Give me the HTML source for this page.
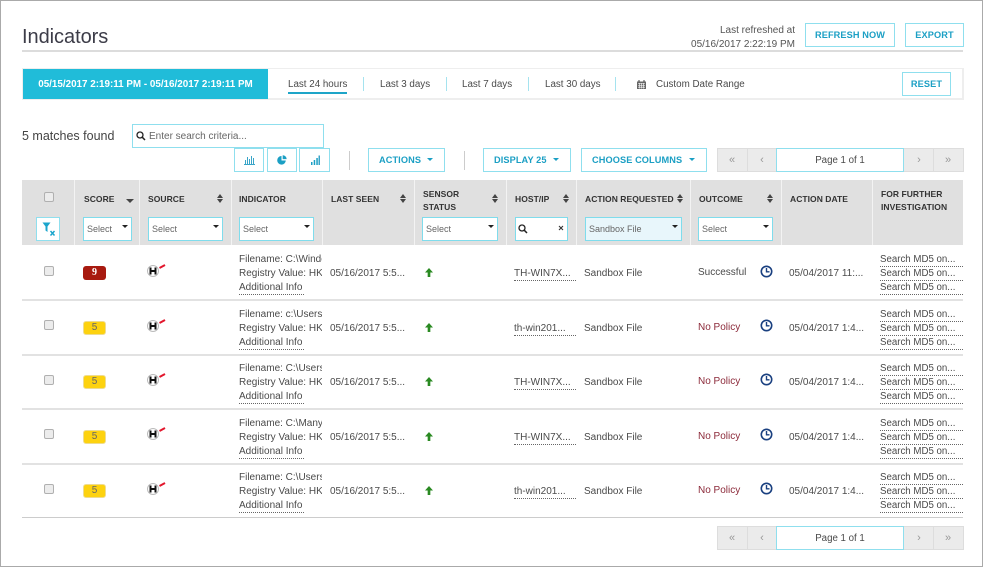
<!DOCTYPE html>
<html><head><meta charset="utf-8"><style>
html,body{margin:0;padding:0;background:#fff}
#p{position:relative;width:981px;height:565px;border:1px solid #aaa;overflow:hidden;margin:0;background:#fff;font:10px/14px "Liberation Sans",sans-serif;color:#4a4a4a}
#w{position:absolute;left:-1px;top:-1px;width:983px;height:567px}
#w div,#w span,#w svg{position:absolute;box-sizing:border-box}
.t{white-space:nowrap}
.tab{font-size:9.8px}
.b{border:1px solid #8fdfee;background:#fff;color:#1b9fc4;font-weight:bold;font-size:9.2px;letter-spacing:.1px;text-align:center;line-height:23px;white-space:nowrap}
.h{font-weight:bold;font-size:8.5px;line-height:12.5px;color:#333;letter-spacing:.05px;white-space:nowrap}
.s{background:#fff;border:1px solid #7fdcec;height:24px;top:217px;font-size:9px;line-height:23px;padding-left:3px;color:#666}
.s:after{content:"";position:absolute;right:3px;top:7px;border:3px solid transparent;border-top:3px solid #222;border-bottom:0}
.s.n:after{display:none}
.v{width:1px;background:#fff;top:180px;height:65px;border-left:1px solid #f3f3f3}
.l{height:2px;left:22px;width:941px;background:#e2e2e2}
.r{left:0;width:983px;height:56px}
.r .t,.r .o{margin-top:1px}
.u{border-bottom:1px dotted #666}
.m{left:880px;height:14px;width:83px;font-size:9.7px}
.ar{left:425px;top:23px}
.sep{width:1px;height:14px;top:77px;background:#a5e3ef}
.pg{background:#ebebeb;border:1px solid #ddd;height:24px;left:717px;width:247px}
.pf{background:#fff;border:1px solid #8fdfee;height:24px;left:776px;width:128px;text-align:center;line-height:23px;font-size:9.7px}
.pa{color:#999;font-size:11px;line-height:25px;width:20px;text-align:center}
.sd{width:1px;height:24px;background:#ddd}
.ca{border:3px solid transparent;border-top:3.5px solid #1b9fc4;border-bottom:0;top:158px}
.so:before,.so:after{content:"";position:absolute;left:0;border:3.5px solid transparent}
.so{width:7px;height:9px}
.so:before{top:0;border-bottom:4px solid #444;border-top:0}
.so:after{top:5px;border-top:4px solid #444;border-bottom:0}
.cb{left:44px;width:10px;height:10px;background:#ececec;border:1.5px solid #b0b0b0;border-radius:2px}
.bd{left:83px;width:23px;height:14px;border-radius:3px;top:21px;text-align:center;font-size:10px;line-height:14px}
.red{background:#a81a10;color:#fff;font-weight:bold;font-family:"Liberation Serif",serif}
.yel{background:#fdd20f;color:#666;border:1px solid #eedc90;line-height:12px}
.o{overflow:hidden;white-space:nowrap}
</style></head><body><div id="p"><div id="w">

<div class="t" style="left:22px;top:25px;font-size:20px;line-height:24px;color:#3c3c48;letter-spacing:-.05px">Indicators</div>
<div class="t" style="right:188px;top:24px;font-size:10px;line-height:13.5px;text-align:right;color:#555;white-space:normal;width:130px">Last refreshed at<br>05/16/2017 2:22:19 PM</div>
<div class="b" style="left:805px;top:23px;width:90px;height:24px">REFRESH NOW</div>
<div class="b" style="left:905px;top:23px;width:59px;height:24px">EXPORT</div>
<div style="left:22px;top:50px;width:941px;height:2px;background:#dcdcdc"></div>

<div style="left:22px;top:68px;width:942px;height:32px;border:1px solid #eee;border-width:1px 2px 2px 1px"></div>
<div class="t" style="left:23px;top:69px;width:245px;height:30px;background:#20bcd9;color:#fff;font-weight:bold;text-align:center;line-height:31px;font-size:9.85px">05/15/2017 2:19:11 PM - 05/16/2017 2:19:11 PM</div>
<div class="t tab" style="left:288px;top:78px">Last 24 hours</div>
<div style="left:288px;top:92px;width:59px;height:2px;background:#1ea5c8"></div>
<div class="sep" style="left:363px"></div>
<div class="t tab" style="left:380px;top:78px">Last 3 days</div>
<div class="sep" style="left:446px"></div>
<div class="t tab" style="left:462px;top:78px">Last 7 days</div>
<div class="sep" style="left:528px"></div>
<div class="t tab" style="left:545px;top:78px">Last 30 days</div>
<div class="sep" style="left:615px"></div>
<svg style="left:637px;top:80px" width="9" height="9" viewBox="0 0 9 9"><path d="M0 1.500h9V9H0z" fill="#666"/><path d="M1 3.500h7M1 5.500h7M1 7.200h7M2.700 3v5.500M4.500 3v5.500M6.300 3v5.500" stroke="#fff" stroke-width=".6"/><path d="M2 0v2M7 0v2" stroke="#444"/></svg>
<div class="t tab" style="left:656px;top:78px">Custom Date Range</div>
<div class="b" style="left:902px;top:72px;width:49px;height:24px">RESET</div>

<div class="t" style="left:22px;top:129px;font-size:12.5px;color:#444">5 matches found</div>
<div style="left:132px;top:124px;width:192px;height:24px;border:1px solid #8fdfee;background:#fff"></div>
<svg style="left:136px;top:131px" width="10" height="10" viewBox="0 0 10 10"><circle cx="4" cy="4" r="3" fill="none" stroke="#222" stroke-width="1.300"/><path d="M6.200 6.200L9 9" stroke="#222" stroke-width="1.500"/></svg>
<div class="t" style="left:149px;top:130px;font-size:10px;color:#666">Enter search criteria...</div>

<div class="b" style="left:234px;top:148px;width:30px;height:24px"></div>
<svg style="left:244px;top:155px" width="11" height="10" viewBox="0 0 11 10"><path d="M0 9.500h11M1.500 5v4M3.500 2v7M5.500 4v5M7.500 1v8M9.500 3v6" stroke="#3aa5c8" fill="none"/></svg>
<div class="b" style="left:267px;top:148px;width:30px;height:24px"></div>
<svg style="left:277px;top:155px" width="10" height="10" viewBox="0 0 10 10"><path d="M4.500 1a4.300 4.300 0 1 0 4.300 4.500H4.500z" fill="#1b9fc4"/><path d="M5.700 0.200a4 4 0 0 1 4 3.900H5.700z" fill="#1b9fc4"/></svg>
<div class="b" style="left:299px;top:148px;width:31px;height:24px"></div>
<svg style="left:310px;top:155px" width="10" height="10" viewBox="0 0 10 10"><path d="M1 7h1.500v3H1zM3.700 5h1.500v5H3.700zM6.300 3h1.500v7H6.300z" fill="#1b9fc4"/><path d="M8.500 0.500H10V10H8.500z" fill="#3aa5c8"/></svg>
<div style="left:349px;top:151px;width:1px;height:19px;background:#ccc"></div>
<div class="b" style="left:368px;top:148px;width:77px;height:24px;text-align:left;padding-left:10px">ACTIONS</div>
<div class="ca" style="left:427px"></div>
<div style="left:464px;top:151px;width:1px;height:19px;background:#ccc"></div>
<div class="b" style="left:483px;top:148px;width:88px;height:24px;text-align:left;padding-left:10px">DISPLAY 25</div>
<div class="ca" style="left:553px"></div>
<div class="b" style="left:581px;top:148px;width:126px;height:24px;text-align:left;padding-left:10px">CHOOSE COLUMNS</div>
<div class="ca" style="left:689px"></div>

<div class="pg" style="top:148px"></div>
<div class="sd" style="left:747px;top:148px"></div>
<div class="sd" style="left:933px;top:148px"></div>
<div class="pf" style="top:148px">Page 1 of 1</div>
<div class="pa" style="left:722px;top:148px">«</div>
<div class="pa" style="left:752px;top:148px">‹</div>
<div class="pa" style="left:909px;top:148px">›</div>
<div class="pa" style="left:938px;top:148px">»</div>

<div style="left:22px;top:180px;width:941px;height:65px;background:#e0e0e0"></div>
<div class="v" style="left:74px"></div><div class="v" style="left:139px"></div><div class="v" style="left:231px"></div><div class="v" style="left:322px"></div><div class="v" style="left:414px"></div><div class="v" style="left:506px"></div><div class="v" style="left:576px"></div><div class="v" style="left:690px"></div><div class="v" style="left:781px"></div><div class="v" style="left:872px"></div>
<div class="cb" style="top:192px"></div>
<div class="b" style="left:36px;top:217px;width:24px;height:24px"></div>
<svg style="left:42px;top:222px" width="14" height="14" viewBox="0 0 14 14"><path d="M0.500 0.500h8L5.500 4.500V10L3.500 8.500V4.500z" fill="#1ba5cc"/><path d="M8.500 9l4 4.500M12.500 9l-4 4.500" stroke="#1ba5cc" stroke-width="1.500"/></svg>
<div class="h" style="left:84px;top:193px">SCORE</div>
<div class="h" style="left:148px;top:193px">SOURCE</div>
<div class="h" style="left:239px;top:193px">INDICATOR</div>
<div class="h" style="left:331px;top:193px">LAST SEEN</div>
<div class="h" style="left:423px;top:188px">SENSOR<br>STATUS</div>
<div class="h" style="left:515px;top:193px">HOST/IP</div>
<div class="h" style="left:585px;top:193px">ACTION REQUESTED</div>
<div class="h" style="left:699px;top:193px">OUTCOME</div>
<div class="h" style="left:790px;top:193px">ACTION DATE</div>
<div class="h" style="left:881px;top:188px">FOR FURTHER<br>INVESTIGATION</div>
<div style="left:126px;top:199px;border:4px solid transparent;border-top:4px solid #444;border-bottom:0"></div>
<div class="so" style="left:217px;top:194px"></div>
<div class="so" style="left:400px;top:194px"></div>
<div class="so" style="left:492px;top:194px"></div>
<div class="so" style="left:563px;top:194px"></div>
<div class="so" style="left:677px;top:194px"></div>
<div class="so" style="left:767px;top:194px"></div>
<div class="s" style="left:83px;width:49px">Select</div>
<div class="s" style="left:148px;width:75px">Select</div>
<div class="s" style="left:239px;width:75px">Select</div>
<div class="s" style="left:422px;width:76px">Select</div>
<div class="s n" style="left:515px;width:53px"></div>
<svg style="left:518px;top:224px" width="10" height="10" viewBox="0 0 10 10"><circle cx="4" cy="4" r="3" fill="none" stroke="#222" stroke-width="1.300"/><path d="M6.200 6.200L9 9" stroke="#222" stroke-width="1.500"/></svg>
<svg style="left:558px;top:225px" width="6" height="6" viewBox="0 0 6 6"><path d="M1 1l4 4M5 1l-4 4" stroke="#333" stroke-width="1.100"/></svg>
<div class="s" style="left:585px;width:97px;background:#e8f6fb">Sandbox File</div>
<div class="s" style="left:698px;width:75px">Select</div>

<!-- ROW 1 -->
<div class="r" style="top:245px">
<div class="cb" style="top:21px"></div><div class="bd red">9</div>
<svg style="left:147px;top:18px" width="20" height="14" viewBox="0 0 20 14"><circle cx="6" cy="8" r="5.500" fill="#fff" stroke="#bbb"/><path d="M3.500 4.500v7M8.500 4.500v7M3.500 8h5" stroke="#111" stroke-width="2"/><path d="M12.500 5L18 2" stroke="#e2162c" stroke-width="2"/></svg>
<div class="o" style="left:239px;top:7px;width:83px;height:14px">Filename: C:\Windows\System</div>
<div class="o" style="left:239px;top:21px;width:83px;height:14px">Registry Value: HKEY</div>
<div class="t u" style="left:239px;top:35px;height:14px;width:65px">Additional Info</div>
<div class="t" style="left:330px;top:21px">05/16/2017 5:5...</div>
<svg class="ar" width="8" height="9" viewBox="0 0 9 10"><path d="M4.500 0L9 5H6v5H3V5H0z" fill="#2a8a22"/></svg>
<div class="t u" style="left:514px;top:21px;height:14px;width:62px">TH-WIN7X...</div>
<div class="t" style="left:584px;top:21px">Sandbox File</div>
<div class="t" style="left:698px;top:20px">Successful</div>
<svg style="left:760px;top:20px" width="13" height="13" viewBox="0 0 13 13"><circle cx="6.500" cy="6.500" r="5.200" fill="none" stroke="#1a4080" stroke-width="1.600"/><path d="M6.500 3v3.800h3" fill="none" stroke="#1a4080" stroke-width="1.400"/></svg>
<div class="t" style="left:789px;top:21px">05/04/2017 11:...</div>
<div class="t u m" style="top:7px">Search MD5 on...</div>
<div class="t u m" style="top:21px">Search MD5 on...</div>
<div class="t u m" style="top:35px">Search MD5 on...</div>
<div class="l" style="top:54px"></div>
</div>

<!-- ROW 2 -->
<div class="r" style="top:300px">
<div class="cb" style="top:20px"></div><div class="bd yel">5</div>
<svg style="left:147px;top:18px" width="20" height="14" viewBox="0 0 20 14"><circle cx="6" cy="8" r="5.500" fill="#fff" stroke="#bbb"/><path d="M3.500 4.500v7M8.500 4.500v7M3.500 8h5" stroke="#111" stroke-width="2"/><path d="M12.500 5L18 2" stroke="#e2162c" stroke-width="2"/></svg>
<div class="o" style="left:239px;top:7px;width:83px;height:14px">Filename: c:\Users\Admin</div>
<div class="o" style="left:239px;top:21px;width:83px;height:14px">Registry Value: HKEY</div>
<div class="t u" style="left:239px;top:35px;height:14px;width:65px">Additional Info</div>
<div class="t" style="left:330px;top:21px">05/16/2017 5:5...</div>
<svg class="ar" width="8" height="9" viewBox="0 0 9 10"><path d="M4.500 0L9 5H6v5H3V5H0z" fill="#2a8a22"/></svg>
<div class="t u" style="left:514px;top:21px;height:14px;width:62px">th-win201...</div>
<div class="t" style="left:584px;top:21px">Sandbox File</div>
<div class="t" style="left:698px;top:20px;color:#8c2a3a">No Policy</div>
<svg style="left:760px;top:19px" width="13" height="13" viewBox="0 0 13 13"><circle cx="6.500" cy="6.500" r="5.200" fill="none" stroke="#1a4080" stroke-width="1.600"/><path d="M6.500 3v3.800h3" fill="none" stroke="#1a4080" stroke-width="1.400"/></svg>
<div class="t" style="left:789px;top:21px">05/04/2017 1:4...</div>
<div class="t u m" style="top:7px">Search MD5 on...</div>
<div class="t u m" style="top:21px">Search MD5 on...</div>
<div class="t u m" style="top:35px">Search MD5 on...</div>
<div class="l" style="top:54px"></div>
</div>

<!-- ROW 3 -->
<div class="r" style="top:354px">
<div class="cb" style="top:21px"></div><div class="bd yel">5</div>
<svg style="left:147px;top:18px" width="20" height="14" viewBox="0 0 20 14"><circle cx="6" cy="8" r="5.500" fill="#fff" stroke="#bbb"/><path d="M3.500 4.500v7M8.500 4.500v7M3.500 8h5" stroke="#111" stroke-width="2"/><path d="M12.500 5L18 2" stroke="#e2162c" stroke-width="2"/></svg>
<div class="o" style="left:239px;top:7px;width:83px;height:14px">Filename: C:\Users\Admin</div>
<div class="o" style="left:239px;top:21px;width:83px;height:14px">Registry Value: HKEY</div>
<div class="t u" style="left:239px;top:35px;height:14px;width:65px">Additional Info</div>
<div class="t" style="left:330px;top:21px">05/16/2017 5:5...</div>
<svg class="ar" width="8" height="9" viewBox="0 0 9 10"><path d="M4.500 0L9 5H6v5H3V5H0z" fill="#2a8a22"/></svg>
<div class="t u" style="left:514px;top:21px;height:14px;width:62px">TH-WIN7X...</div>
<div class="t" style="left:584px;top:21px">Sandbox File</div>
<div class="t" style="left:698px;top:20px;color:#8c2a3a">No Policy</div>
<svg style="left:760px;top:19px" width="13" height="13" viewBox="0 0 13 13"><circle cx="6.500" cy="6.500" r="5.200" fill="none" stroke="#1a4080" stroke-width="1.600"/><path d="M6.500 3v3.800h3" fill="none" stroke="#1a4080" stroke-width="1.400"/></svg>
<div class="t" style="left:789px;top:21px">05/04/2017 1:4...</div>
<div class="t u m" style="top:7px">Search MD5 on...</div>
<div class="t u m" style="top:21px">Search MD5 on...</div>
<div class="t u m" style="top:35px">Search MD5 on...</div>
<div class="l" style="top:54px"></div>
</div>

<!-- ROW 4 -->
<div class="r" style="top:409px">
<div class="cb" style="top:20px"></div><div class="bd yel">5</div>
<svg style="left:147px;top:17px" width="20" height="14" viewBox="0 0 20 14"><circle cx="6" cy="8" r="5.500" fill="#fff" stroke="#bbb"/><path d="M3.500 4.500v7M8.500 4.500v7M3.500 8h5" stroke="#111" stroke-width="2"/><path d="M12.500 5L18 2" stroke="#e2162c" stroke-width="2"/></svg>
<div class="o" style="left:239px;top:7px;width:83px;height:14px">Filename: C:\ManyFiles</div>
<div class="o" style="left:239px;top:21px;width:83px;height:14px">Registry Value: HKEY</div>
<div class="t u" style="left:239px;top:35px;height:14px;width:65px">Additional Info</div>
<div class="t" style="left:330px;top:21px">05/16/2017 5:5...</div>
<svg class="ar" width="8" height="9" viewBox="0 0 9 10"><path d="M4.500 0L9 5H6v5H3V5H0z" fill="#2a8a22"/></svg>
<div class="t u" style="left:514px;top:21px;height:14px;width:62px">TH-WIN7X...</div>
<div class="t" style="left:584px;top:21px">Sandbox File</div>
<div class="t" style="left:698px;top:20px;color:#8c2a3a">No Policy</div>
<svg style="left:760px;top:19px" width="13" height="13" viewBox="0 0 13 13"><circle cx="6.500" cy="6.500" r="5.200" fill="none" stroke="#1a4080" stroke-width="1.600"/><path d="M6.500 3v3.800h3" fill="none" stroke="#1a4080" stroke-width="1.400"/></svg>
<div class="t" style="left:789px;top:21px">05/04/2017 1:4...</div>
<div class="t u m" style="top:7px">Search MD5 on...</div>
<div class="t u m" style="top:21px">Search MD5 on...</div>
<div class="t u m" style="top:35px">Search MD5 on...</div>
<div class="l" style="top:54px"></div>
</div>

<!-- ROW 5 -->
<div class="r" style="top:463px">
<div class="cb" style="top:21px"></div><div class="bd yel">5</div>
<svg style="left:147px;top:18px" width="20" height="14" viewBox="0 0 20 14"><circle cx="6" cy="8" r="5.500" fill="#fff" stroke="#bbb"/><path d="M3.500 4.500v7M8.500 4.500v7M3.500 8h5" stroke="#111" stroke-width="2"/><path d="M12.500 5L18 2" stroke="#e2162c" stroke-width="2"/></svg>
<div class="o" style="left:239px;top:7px;width:83px;height:14px">Filename: C:\Users\Admin</div>
<div class="o" style="left:239px;top:21px;width:83px;height:14px">Registry Value: HKEY</div>
<div class="t u" style="left:239px;top:35px;height:14px;width:65px">Additional Info</div>
<div class="t" style="left:330px;top:21px">05/16/2017 5:5...</div>
<svg class="ar" width="8" height="9" viewBox="0 0 9 10"><path d="M4.500 0L9 5H6v5H3V5H0z" fill="#2a8a22"/></svg>
<div class="t u" style="left:514px;top:21px;height:14px;width:62px">th-win201...</div>
<div class="t" style="left:584px;top:21px">Sandbox File</div>
<div class="t" style="left:698px;top:20px;color:#8c2a3a">No Policy</div>
<svg style="left:760px;top:19px" width="13" height="13" viewBox="0 0 13 13"><circle cx="6.500" cy="6.500" r="5.200" fill="none" stroke="#1a4080" stroke-width="1.600"/><path d="M6.500 3v3.800h3" fill="none" stroke="#1a4080" stroke-width="1.400"/></svg>
<div class="t" style="left:789px;top:21px">05/04/2017 1:4...</div>
<div class="t u m" style="top:7px">Search MD5 on...</div>
<div class="t u m" style="top:21px">Search MD5 on...</div>
<div class="t u m" style="top:35px">Search MD5 on...</div>
<div class="l" style="top:54px;background:#ccc;height:1px"></div>
</div>

<div class="pg" style="top:526px"></div>
<div class="sd" style="left:747px;top:526px"></div>
<div class="sd" style="left:933px;top:526px"></div>
<div class="pf" style="top:526px">Page 1 of 1</div>
<div class="pa" style="left:722px;top:526px">«</div>
<div class="pa" style="left:752px;top:526px">‹</div>
<div class="pa" style="left:909px;top:526px">›</div>
<div class="pa" style="left:938px;top:526px">»</div>

</div></div></body></html>
